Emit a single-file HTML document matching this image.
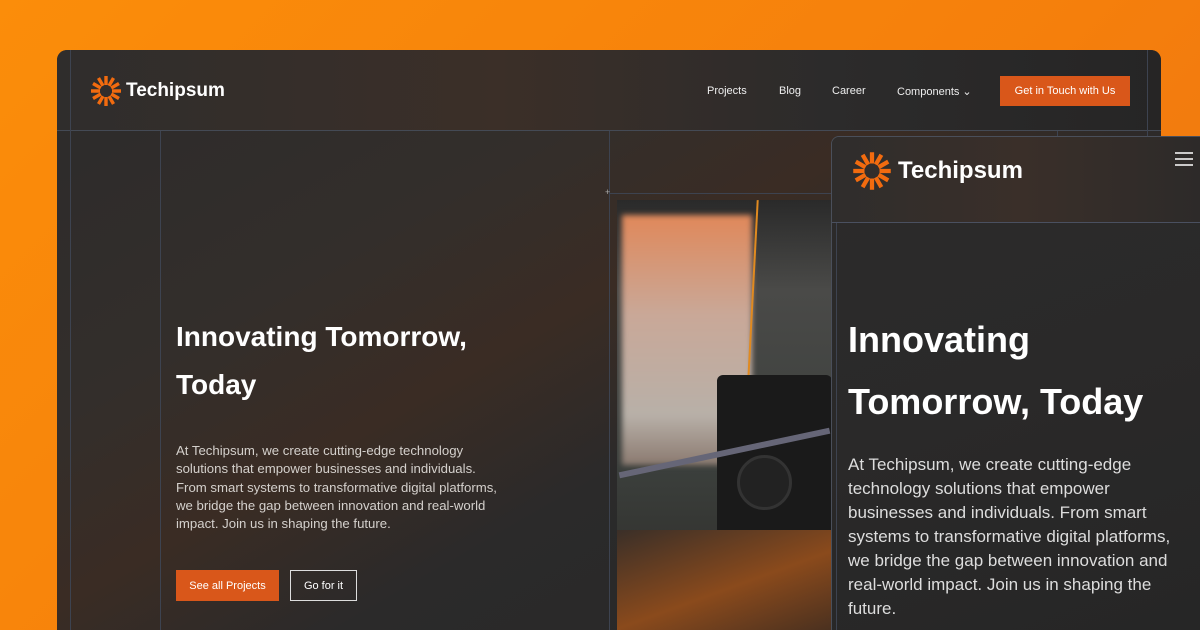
<!DOCTYPE html>
<html><head><style>
*{margin:0;padding:0;box-sizing:border-box}
html,body{width:1200px;height:630px;overflow:hidden}
body{background:linear-gradient(135deg,#fb8d0a 0%,#f57f0c 60%,#ec7414 100%);font-family:"Liberation Sans",sans-serif;position:relative}
.panel{position:absolute;left:57px;top:50px;width:1104px;height:600px;border-radius:10px;background:linear-gradient(150deg,#2c2b2b 0%,#332e2b 30%,#3a2c24 45%,#2b2a2a 60%,#262626 100%);overflow:hidden}
.hdr{position:absolute;left:0;top:0;width:100%;height:81px;background:linear-gradient(90deg,#2f2d2c,#3b2f28 40%,#2c2b2b 70%,#262525);border-bottom:1px solid #444a55}
.vl{position:absolute;width:1px;background:#3d4350}
.hl{position:absolute;height:1px;background:#3d4350}
.logo{position:absolute;display:flex;align-items:center;color:#fff;font-weight:bold}
.nav{position:absolute;top:35px;font-size:11px;color:#eee}
.btn{position:absolute;background:#d9571a;color:#fff;font-size:11px;display:flex;align-items:center;justify-content:center}
h1{position:absolute;color:#fff;font-weight:bold;font-family:"Liberation Sans",sans-serif}
p{position:absolute;color:#d4d0cc}
</style></head><body>
<svg width="0" height="0" style="position:absolute"><defs><g id="sun" stroke="#f26b0f" stroke-width="3.4">
<line x1="0" y1="-6" x2="0" y2="-15"/><line x1="0" y1="-6" x2="0" y2="-15" transform="rotate(30)"/><line x1="0" y1="-6" x2="0" y2="-15" transform="rotate(60)"/><line x1="0" y1="-6" x2="0" y2="-15" transform="rotate(90)"/><line x1="0" y1="-6" x2="0" y2="-15" transform="rotate(120)"/><line x1="0" y1="-6" x2="0" y2="-15" transform="rotate(150)"/><line x1="0" y1="-6" x2="0" y2="-15" transform="rotate(180)"/><line x1="0" y1="-6" x2="0" y2="-15" transform="rotate(210)"/><line x1="0" y1="-6" x2="0" y2="-15" transform="rotate(240)"/><line x1="0" y1="-6" x2="0" y2="-15" transform="rotate(270)"/><line x1="0" y1="-6" x2="0" y2="-15" transform="rotate(300)"/><line x1="0" y1="-6" x2="0" y2="-15" transform="rotate(330)"/></g></defs></svg>
<div class="panel">
 <div class="hdr"></div>
 <div class="vl" style="left:13px;top:0;height:600px"></div>
 <div class="vl" style="left:103px;top:81px;height:520px"></div>
 <div class="vl" style="left:552px;top:81px;height:520px"></div>
 <div class="vl" style="left:1000px;top:81px;height:60px"></div>
 <div class="vl" style="left:1090px;top:0;height:120px"></div>
 <div class="hl" style="left:552px;top:143px;width:300px"></div>
 <div style="position:absolute;left:548px;top:137px;color:#aaa;font-size:9px">+</div>
 <div class="logo" style="left:33px;top:25px;font-size:19px">
  <svg width="32" height="32" viewBox="-16 -16 32 32" style="margin-right:4px"><use href="#sun"/></svg>Techipsum</div>
 <div class="nav" style="left:650px">Projects</div>
 <div class="nav" style="left:722px">Blog</div>
 <div class="nav" style="left:775px">Career</div>
 <div class="nav" style="left:840px">Components &#8964;</div>
 <div class="btn" style="left:943px;top:26px;width:130px;height:30px">Get in Touch with Us</div>
 <h1 style="left:119px;top:263px;font-size:28px;line-height:48px">Innovating Tomorrow,<br>Today</h1>
 <p style="left:119px;top:392px;width:325px;font-size:13.2px;line-height:18.3px">At Techipsum, we create cutting-edge technology solutions that empower businesses and individuals. From smart systems to transformative digital platforms, we bridge the gap between innovation and real-world impact. Join us in shaping the future.</p>
 <div class="btn" style="left:119px;top:520px;width:103px;height:31px">See all Projects</div>
 <div style="position:absolute;left:233px;top:520px;width:67px;height:31px;border:1px solid #ddd;color:#fff;font-size:11px;display:flex;align-items:center;justify-content:center">Go for it</div>
 <div style="position:absolute;left:560px;top:150px;width:215px;height:450px;overflow:hidden;background:linear-gradient(180deg,#2a2a2a 0%,#4a4a48 20%,#3b3f3c 60%,#2a2622 100%)">
  <div style="position:absolute;left:5px;top:15px;width:130px;height:250px;background:linear-gradient(180deg,#e0885a,#c9a898 40%,#b8b0a8 80%,#8b7a70);filter:blur(3px)"></div>
  <div style="position:absolute;left:135px;top:0;width:2px;height:180px;background:#e08a20;transform:rotate(3deg)"></div>
  <div style="position:absolute;left:100px;top:175px;width:115px;height:170px;background:#1a1a1a;border-radius:6px"></div>
  <div style="position:absolute;left:120px;top:255px;width:55px;height:55px;background:#222;border-radius:50%;border:3px solid #333"></div>
  <div style="position:absolute;left:0;top:250px;width:215px;height:6px;background:#667;transform:rotate(-12deg)"></div>
  <div style="position:absolute;left:0;top:330px;width:215px;height:120px;background:linear-gradient(160deg,#3a2f28,#8a4a1c 50%,#3a2a20)"></div>
 </div>
</div>
<div style="position:absolute;left:831px;top:136px;width:380px;height:500px;border-radius:8px 0 0 0;border:1px solid #4a4f5a;background:linear-gradient(160deg,#2c2b2b,#2a2929 50%,#262626);overflow:hidden">
 <div style="position:absolute;left:0;top:0;width:100%;height:86px;background:linear-gradient(90deg,#2f2d2c,#3a2f29 50%,#2c2a29);border-bottom:1px solid #4a5060"></div>
 <div class="vl" style="left:4px;top:86px;height:420px"></div>
 <div class="logo" style="left:20px;top:14px;font-size:24px">
  <svg width="40" height="40" viewBox="-16 -16 32 32" style="margin-right:6px"><use href="#sun"/></svg>Techipsum</div>
 <svg style="position:absolute;left:343px;top:14px" width="18" height="16"><g stroke="#fff" stroke-width="1.6"><line x1="0" y1="2" x2="18" y2="2"/><line x1="0" y1="8" x2="18" y2="8"/><line x1="0" y1="14" x2="18" y2="14"/></g></svg>
 <h1 style="left:16px;top:172px;font-size:36px;line-height:62px">Innovating<br>Tomorrow, Today</h1>
 <p style="left:16px;top:316px;width:340px;font-size:17px;line-height:24px;color:#ddd">At Techipsum, we create cutting-edge technology solutions that empower businesses and individuals. From smart systems to transformative digital platforms, we bridge the gap between innovation and real-world impact. Join us in shaping the future.</p>
</div>
</body></html>
